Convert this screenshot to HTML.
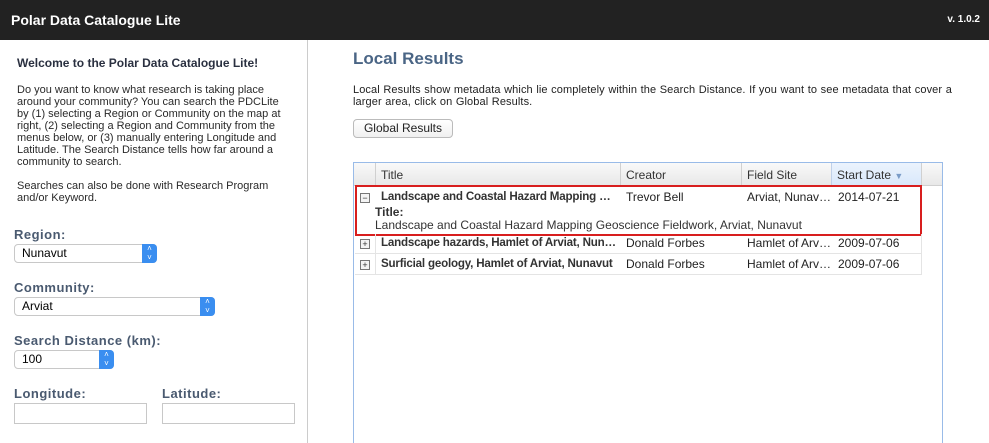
<!DOCTYPE html>
<html><head><style>
html,body{margin:0;width:989px;height:443px;overflow:hidden}
body{font-family:"Liberation Sans",Arial,sans-serif;background:#fff;position:relative}
.top{position:absolute;left:0;top:0;width:989px;height:40px;background:#222;color:#fff;font-weight:bold}
.abs{position:absolute}
.lbl{font-weight:bold;color:#4a5a70;font-size:13px;letter-spacing:0.5px}
.sel{position:absolute;height:17px;border:1px solid #c8c8c8;border-radius:4px;background:#fff;font-size:12px;line-height:17px;padding-left:7px;box-sizing:content-box}
.sel b{position:absolute;right:-1px;top:-1px;width:15px;height:19px;background:#3a8ef0;border-radius:0 4px 4px 0;color:#fff;font-size:8px;line-height:9px;text-align:center;font-weight:normal}
.inp{position:absolute;width:131px;height:19px;border:1px solid #c8c8c8}
.cell{position:absolute;font-size:12px;color:#222;white-space:nowrap;overflow:hidden;text-overflow:ellipsis}
.bt{font-weight:bold;width:236px;font-size:11.6px;letter-spacing:-0.2px;color:#333}
.pm{position:absolute;left:360px;width:8px;height:8px;border:1px solid #777;font-size:9px;line-height:8px;text-align:center;color:#333;background:#f4f4f4}
</style></head><body>
<div class="top"><span class="abs" style="left:11px;top:12px;font-size:14px">Polar Data Catalogue Lite</span><span class="abs" style="right:9px;top:14px;font-size:10px">v. 1.0.2</span></div>
<div class="abs" style="left:307px;top:40px;width:1px;height:403px;background:#ccc"></div>
<div class="abs" style="left:17px;top:56px;font-size:12px;font-weight:bold;color:#2a3040">Welcome to the Polar Data Catalogue Lite!</div>
<div class="abs" style="left:17px;top:84px;width:275px;font-size:11px;line-height:12px;color:#2a2a2a">Do you want to know what research is taking place around your community? You can search the PDCLite by (1) selecting a Region or Community on the map at right, (2) selecting a Region and Community from the menus below, or (3) manually entering Longitude and Latitude. The Search Distance tells how far around a community to search.<br><br>Searches can also be done with Research Program and/or Keyword.</div>
<div class="abs lbl" style="left:14px;top:227px">Region:</div>
<div class="sel" style="left:14px;top:244px;width:134px">Nunavut<b>˄<br>˅</b></div>
<div class="abs lbl" style="left:14px;top:280px">Community:</div>
<div class="sel" style="left:14px;top:297px;width:192px">Arviat<b>˄<br>˅</b></div>
<div class="abs lbl" style="left:14px;top:333px">Search Distance (km):</div>
<div class="sel" style="left:14px;top:350px;width:91px">100<b>˄<br>˅</b></div>
<div class="abs lbl" style="left:14px;top:386px">Longitude:</div>
<div class="abs lbl" style="left:162px;top:386px">Latitude:</div>
<div class="inp" style="left:14px;top:403px"></div>
<div class="inp" style="left:162px;top:403px"></div>

<div class="abs" style="left:353px;top:49px;font-size:17px;font-weight:bold;color:#4a6585">Local Results</div>
<div class="abs" style="left:353px;top:84px;width:608px;font-size:11px;line-height:12px;color:#222;letter-spacing:0.1px;word-spacing:0.4px">Local Results show metadata which lie completely within the Search Distance. If you want to see metadata that cover a larger area, click on Global Results.</div>
<div class="abs" style="left:353px;top:119px;width:98px;height:17px;border:1px solid #bbb;border-radius:4px;font-size:12px;line-height:17px;text-align:center;color:#222;background:linear-gradient(#fff,#f0f0f0)">Global Results</div>

<div class="abs" style="left:353px;top:162px;width:588px;height:290px;border:1px solid #99bbe8"></div>
<div class="abs" style="left:354px;top:163px;width:588px;height:22px;background:linear-gradient(#f9f9f9,#e8e8e8);border-bottom:1px solid #d0d0d0"></div>
<div class="abs" style="left:831px;top:163px;width:90px;height:22px;background:linear-gradient(#ebf3fd,#d9e8fb)"></div>
<div class="abs" style="left:375px;top:163px;width:1px;height:22px;background:#d0d0d0"></div>
<div class="abs" style="left:620px;top:163px;width:1px;height:22px;background:#d0d0d0"></div>
<div class="abs" style="left:741px;top:163px;width:1px;height:22px;background:#d0d0d0"></div>
<div class="abs" style="left:831px;top:163px;width:1px;height:22px;background:#c0d0e8"></div>
<div class="abs" style="left:921px;top:163px;width:1px;height:22px;background:#d0d0d0"></div>
<div class="cell" style="left:381px;top:168px;color:#333">Title</div>
<div class="cell" style="left:626px;top:168px;color:#333">Creator</div>
<div class="cell" style="left:747px;top:168px;color:#333">Field Site</div>
<div class="cell" style="left:837px;top:168px;color:#333">Start Date <span style="color:#7a9cc8;font-size:9px">▼</span></div>

<div class="abs" style="left:355px;top:185px;width:563px;height:47px;border:2px solid #d81e1e"></div>
<div class="pm" style="top:193px">−</div>
<div class="cell bt" style="left:381px;top:190px">Landscape and Coastal Hazard Mapping Geoscience</div>
<div class="cell" style="left:626px;top:190px">Trevor Bell</div>
<div class="cell" style="left:747px;top:190px">Arviat, Nunav…</div>
<div class="cell" style="left:838px;top:190px">2014-07-21</div>
<div class="cell" style="left:375px;top:205px;font-weight:bold;color:#333">Title:</div>
<div class="cell" style="left:375px;top:218px;color:#333">Landscape and Coastal Hazard Mapping Geoscience Fieldwork, Arviat, Nunavut</div>

<div class="abs" style="left:355px;top:253px;width:567px;height:1px;background:#e4e4e4"></div>
<div class="abs" style="left:355px;top:274px;width:567px;height:1px;background:#e4e4e4"></div>
<div class="abs" style="left:921px;top:234px;width:1px;height:41px;background:#e4e4e4"></div>
<div class="abs" style="left:375px;top:234px;width:1px;height:41px;background:#e4e4e4"></div>
<div class="pm" style="top:239px">+</div>
<div class="cell bt" style="left:381px;top:236px">Landscape hazards, Hamlet of Arviat, Nunavut</div>
<div class="cell" style="left:626px;top:236px">Donald Forbes</div>
<div class="cell" style="left:747px;top:236px">Hamlet of Arv…</div>
<div class="cell" style="left:838px;top:236px">2009-07-06</div>
<div class="pm" style="top:260px">+</div>
<div class="cell bt" style="left:381px;top:257px">Surficial geology, Hamlet of Arviat, Nunavut</div>
<div class="cell" style="left:626px;top:257px">Donald Forbes</div>
<div class="cell" style="left:747px;top:257px">Hamlet of Arv…</div>
<div class="cell" style="left:838px;top:257px">2009-07-06</div>
</body></html>
